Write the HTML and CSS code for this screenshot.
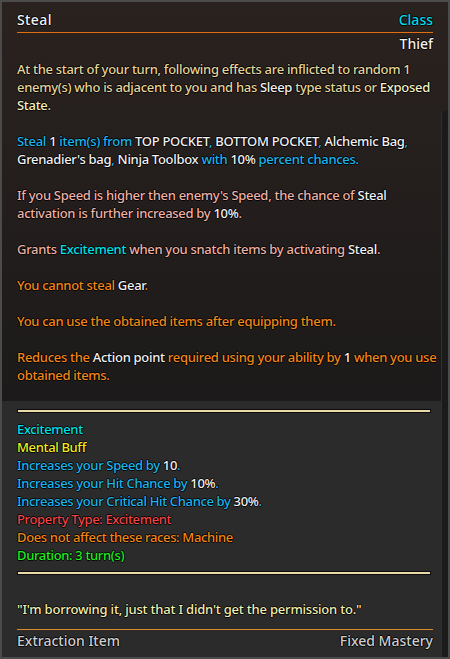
FILE: index.html
```html
<!DOCTYPE html>
<html>
<head>
<meta charset="utf-8">
<link rel="stylesheet" href="styles.css">
</head>
<body>
<div class="tip">
  <section class="top">
    <div class="head"><span class="title">Steal</span><span class="cls">Class</span></div>
    <div class="sub">Thief</div>
    <div class="desc">
      <p class="y">At the start of your turn, following effects are inflicted to random 1<br>enemy(s) who is adjacent to you and has <span class="w">Sleep</span> type status or <span class="e">Exposed</span><br><span class="e">State</span>.</p>
      <p class="b">Steal <span class="w">1</span> item(s) from <span class="w">TOP POCKET</span>, <span class="w">BOTTOM POCKET</span>, <span class="w">Alchemic Bag</span>,<br><span class="w">Grenadier's bag</span>, <span class="w">Ninja Toolbox</span> with <span class="w">10%</span> percent chances.</p>
      <p class="p">If you Speed is higher then enemy's Speed, the chance of <span class="w">Steal</span><br>activation is further increased by <span class="w">10%</span>.</p>
      <p class="p">Grants <span class="c">Excitement</span> when you snatch items by activating <span class="w">Steal</span>.</p>
      <p class="o">You cannot steal <span class="w">Gear</span>.</p>
      <p class="o">You can use the obtained items after equipping them.</p>
      <p class="o">Reduces the <span class="w">Action point</span> required using your ability by <span class="w">1</span> when you use<br>obtained items.</p>
    </div>
  </section>
  <section class="bottom">
    <div class="rule"></div>
    <div class="effects">
      <div class="c">Excitement</div>
      <div class="yl">Mental Buff</div>
      <div class="b">Increases your Speed by <span class="w">10</span>.</div>
      <div class="b">Increases your Hit Chance by <span class="w">10%</span>.</div>
      <div class="b">Increases your Critical Hit Chance by <span class="w">30%</span>.</div>
      <div class="r">Property Type: Excitement</div>
      <div class="o">Does not affect these races: Machine</div>
      <div class="g">Duration: 3 turn(s)</div>
    </div>
    <div class="rule second"></div>
    <p class="quote">"I'm borrowing it, just that I didn't get the permission to."</p>
    <div class="foot"><span>Extraction Item</span><span>Fixed Mastery</span></div>
  </section>
  <div class="thumb"></div>
</div>
</body>
</html>
```
FILE: styles.css
```css
* { box-sizing: border-box; }
html, body { margin: 0; padding: 0; background: #2a2a2a; }
body {
  font-family: "Noto Sans", "Open Sans", sans-serif;
  font-size: 13px;
  line-height: 18px;
  font-weight: 500;
}
.tip {
  position: relative;
  width: 450px;
  height: 659px;
  border: 2px solid #4b4b4b;
  display: flex;
  flex-direction: column;
  overflow: hidden;
  text-shadow: -1px 0 rgba(0,0,0,.85), 1px 0 rgba(0,0,0,.85), 0 -1px rgba(0,0,0,.85), 0 1px rgba(0,0,0,.85);
}
.top {
  background: linear-gradient(#2a221f, #1c1a1a);
  padding: 9px 15px 17px 15px;
}
.head {
  display: flex;
  justify-content: space-between;
  align-items: baseline;
  font-size: 14px;
  padding-bottom: 3px;
  border-bottom: 1px solid #e36e12;
}
.title { color: #f4f4f4; font-weight: 500; letter-spacing: 0.4px; }
.cls { color: #00dde6; }
.sub {
  margin-top: 2px;
  text-align: right;
  font-size: 14px;
  color: #f4f4f4;
}
.desc { margin-top: 7px; letter-spacing: -0.3px; }
.desc p { margin: 0 0 18px 0; white-space: nowrap; }
.desc p:last-child { margin-bottom: 0; }
.bottom {
  flex: 1;
  background: #2b2b2b;
  padding: 8px 15px 0 15px;
}
.rule {
  height: 4px;
  margin-right: 2px;
  background: #eadba6;
  border: 1px solid #0c0c0c;
}
.rule.second { margin-top: 7px; }
.effects { margin-top: 7px; white-space: nowrap; letter-spacing: -0.35px; }
.quote {
  margin: 25px 0 0 0;
  color: #f3eeb0;
  white-space: nowrap;
  letter-spacing: -0.2px;
  padding-bottom: 11px;
  border-bottom: 1px solid #dc8a2c;
}
.foot {
  margin-top: 2px;
  display: flex;
  justify-content: space-between;
  font-size: 14px;
  color: #cfcfcf;
}
.thumb {
  position: absolute;
  left: 439px;
  top: 108px;
  width: 8px;
  bottom: -4px;
  background: #1b1b1c;
  border-radius: 4px 4px 0 0;
  border-left: 1px solid #2f2f31;
}
.y { color: #e6d59a; }
.e { color: #f4f0c6; }
.w { color: #f2f2f2; }
.c { color: #00e0e8; }
.b { color: #1db5ee; }
.p { color: #efb1a6; }
.o { color: #f2881a; }
.r { color: #f04646; }
.g { color: #22ee22; }
.yl { color: #efef22; }
```
